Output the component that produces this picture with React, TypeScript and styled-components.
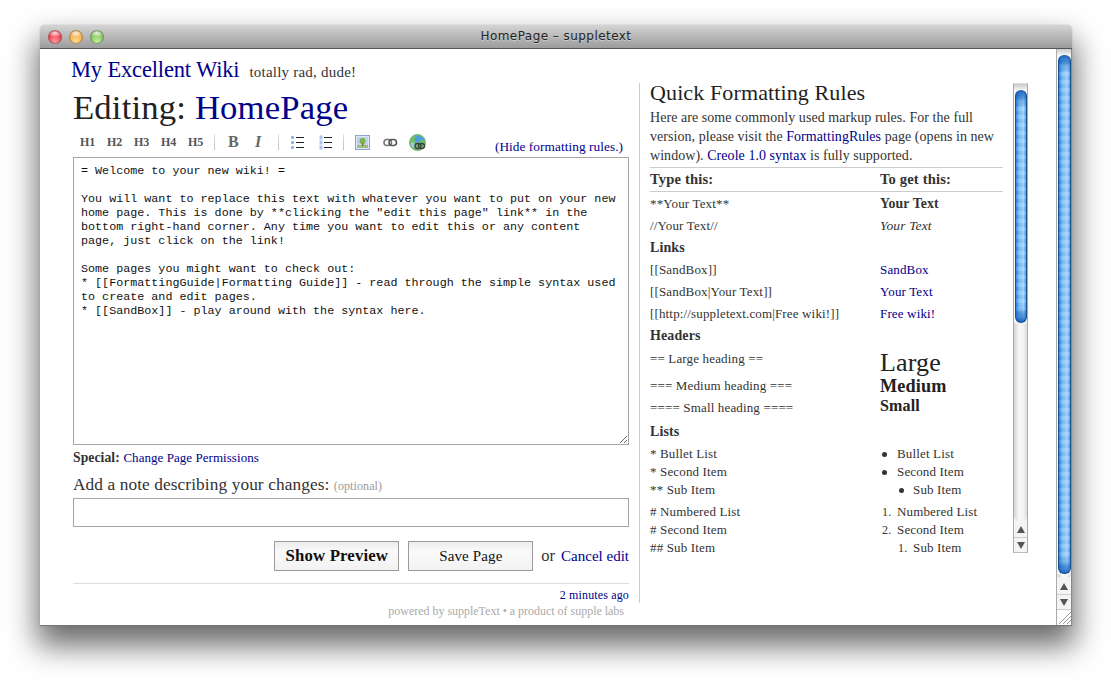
import * as React from "react";
import styled, { createGlobalStyle } from "styled-components";

const GlobalStyle = createGlobalStyle`
  html, body {
    margin: 0;
    padding: 0;
    background: #fff;
  }
  body {
    width: 1111px;
    height: 680px;
    overflow: hidden;
    font-family: "Liberation Serif", Georgia, serif;
    color: #333;
  }
`;

const LINK = "#00008b";

const EDITOR_TEXT = `= Welcome to your new wiki! =

You will want to replace this text with whatever you want to put on your new home page. This is done by **clicking the "edit this page" link** in the bottom right-hand corner. Any time you want to edit this or any content page, just click on the link!

Some pages you might want to check out:
* [[FormattingGuide|Formatting Guide]] - read through the simple syntax used to create and edit pages.
* [[SandBox]] - play around with the syntax here.`;

const Desktop = styled.div`
  padding: 25px 39px 54px 40px;
`;

const Window = styled.div`
  height: 601px;
  display: flex;
  flex-direction: column;
  border-radius: 5px 5px 0 0;
  background: #fff;
  box-shadow: 0 0 1px 0 rgba(0, 0, 0, 0.45), 0 17px 30px 3px rgba(0, 0, 0, 0.58);
`;

const TitleBar = styled.div`
  height: 24px;
  flex: none;
  display: flex;
  align-items: center;
  padding-left: 8px;
  position: relative;
  border-radius: 5px 5px 0 0;
  border-bottom: 1px solid #555;
  box-sizing: border-box;
  background: linear-gradient(#d4d4d4, #9c9c9c);
`;

const Lights = styled.div`
  display: flex;
  gap: 7px;
`;

const Light = styled.span<{ $edge: string; $mid: string; $glow: string }>`
  width: 14px;
  height: 14px;
  border-radius: 50%;
  box-sizing: border-box;
  border: 1px solid rgba(70, 70, 70, 0.4);
  background:
    radial-gradient(ellipse 8px 4px at 50% 18%, rgba(255, 255, 255, 0.85), rgba(255, 255, 255, 0) 100%),
    radial-gradient(circle at 50% 85%, ${(p) => p.$glow}, ${(p) => p.$mid} 60%, ${(p) => p.$edge});
`;

const WindowTitle = styled.div`
  position: absolute;
  left: 0;
  right: 0;
  top: 3px;
  text-align: center;
  font-family: "DejaVu Sans", sans-serif;
  font-size: 12px;
  line-height: 17px;
  letter-spacing: 0.45px;
  color: #222;
  text-shadow: 0 1px 0 rgba(255, 255, 255, 0.35);
`;

const WindowBody = styled.div`
  flex: 1;
  display: flex;
  min-height: 0;
  border-right: 1px solid #8a8a8a;
  border-bottom: 1px solid #777;
`;

const Page = styled.div`
  flex: 1;
  min-width: 0;
  overflow: hidden;
  padding-left: 33px;
`;

const Masthead = styled.div`
  height: 34px;
  display: flex;
  align-items: baseline;
  gap: 10px;
  margin-left: -2px;
  padding-top: 6px;
  box-sizing: border-box;
`;

const SiteName = styled.a`
  font-size: 22.5px;
  line-height: 30px;
  letter-spacing: -0.16px;
  color: ${LINK};
`;

const Tagline = styled.span`
  font-size: 15px;
  color: #333;
  letter-spacing: 0.22px;
`;

const Columns = styled.div`
  display: flex;
`;

const EditColumn = styled.div`
  width: 556px;
  flex: none;
`;

const Heading = styled.h1`
  margin: 0;
  height: 50px;
  font-size: 34.7px;
  line-height: 50px;
  font-weight: 400;
  letter-spacing: 0.16px;
  color: #222;
`;

const Link = styled.a`
  color: ${LINK};
`;

const Toolbar = styled.div`
  height: 24px;
  box-sizing: border-box;
  padding: 0 0 6px 7px;
  display: flex;
  align-items: center;
  position: relative;
`;

const ToolButton = styled.span<{ $italic?: boolean }>`
  width: 27px;
  flex: none;
  font-size: 16px;
  font-weight: 700;
  font-style: ${(p) => (p.$italic ? "italic" : "normal")};
  color: #666;
  line-height: 16px;
`;

const HeadingButton = styled(ToolButton)`
  font-size: 12px;
  color: #555;
`;

const ToolIcon = styled.span<{ $w?: number }>`
  width: ${(p) => p.$w ?? 27}px;
  flex: none;
  display: flex;
  align-items: center;
`;

const ToolDivider = styled.span<{ $before?: number; $after?: number }>`
  width: 1px;
  height: 16px;
  flex: none;
  margin: 0 ${(p) => p.$after ?? 13}px 0 ${(p) => p.$before ?? -1}px;
  background: linear-gradient(#e0e0e0, #c9bcae);
`;

const HideRules = styled.a`
  position: absolute;
  right: 6px;
  top: 5px;
  font-size: 13.3px;
  line-height: 18px;
  letter-spacing: 0.06px;
  color: ${LINK};
`;

const Editor = styled.textarea`
  display: block;
  width: 556px;
  height: 288px;
  box-sizing: border-box;
  margin: 0;
  padding: 6px 7px;
  border: 1px solid #a5a5a5;
  border-radius: 0;
  outline: none;
  overflow: hidden;
  resize: both;
  background: #fff;
  font-family: "Liberation Mono", "Courier New", monospace;
  font-size: 11.72px;
  line-height: 14px;
  color: #111;
`;

const SpecialRow = styled.div`
  margin-top: 4px;
  height: 18px;
  font-size: 13.6px;
  line-height: 18px;
  letter-spacing: 0.1px;
`;

const SpecialLink = styled.a`
  font-size: 13px;
  letter-spacing: 0.05px;
  color: ${LINK};
`;

const NoteLabel = styled.div`
  margin-top: 6px;
  height: 25px;
  font-size: 17.3px;
  line-height: 24px;
  letter-spacing: 0.1px;
  color: #333;
`;

const Optional = styled.span`
  font-size: 12px;
  color: #999;
`;

const NoteInput = styled.div`
  height: 29px;
  box-sizing: border-box;
  border: 1px solid #a5a5a5;
  background: #fff;
`;

const Actions = styled.div`
  margin-top: 14px;
  height: 30px;
  display: flex;
  align-items: center;
  justify-content: flex-end;
`;

const Button = styled.button<{ $primary?: boolean }>`
  width: 125px;
  height: 30px;
  box-sizing: border-box;
  margin: 0 8px 0 0;
  padding: 0;
  border: 1px solid #9a9a9a;
  border-radius: 0;
  background: linear-gradient(#ececec, #fafafa 35%, #f2f2f2);
  font-family: "Liberation Serif", Georgia, serif;
  font-size: ${(p) => (p.$primary ? 16.8 : 15)}px;
  font-weight: ${(p) => (p.$primary ? 700 : 400)};
  letter-spacing: 0.14px;
  color: #111;
  & + & {
    margin-left: 1px;
  }
`;

const Or = styled.span`
  font-size: 16.5px;
  margin-right: 6px;
  color: #333;
`;

const CancelLink = styled.a`
  font-size: 15px;
  color: ${LINK};
`;

const Footer = styled.div`
  margin-top: 12px;
  border-top: 1px solid #ddd;
  padding-top: 2px;
  text-align: right;
`;

const Updated = styled.div`
  height: 17px;
  font-size: 12px;
  line-height: 18px;
  letter-spacing: 0.15px;
  color: ${LINK};
`;

const PoweredBy = styled.div`
  height: 16px;
  padding-right: 5px;
  font-size: 12px;
  line-height: 16px;
  letter-spacing: -0.02px;
  color: #aaa;
`;

const RulesColumn = styled.div`
  margin-left: 10px;
  height: 520px;
  padding-left: 10px;
  border-left: 1px solid #ccc;
  display: flex;
  gap: 10px;
  align-items: flex-start;
`;

const Rules = styled.div`
  width: 353px;
  flex: none;
`;

const RulesTitle = styled.h2`
  margin: 0;
  height: 22px;
  font-size: 22px;
  line-height: 20px;
  font-weight: 400;
  letter-spacing: 0.12px;
  color: #222;
`;

const Intro = styled.p`
  margin: 3px 0 0;
  font-size: 14px;
  line-height: 19px;
  letter-spacing: 0.05px;
  color: #333;
  padding-bottom: 2px;
`;

const RuleRow = styled.div<{ $h?: number }>`
  display: grid;
  grid-template-columns: 230px 1fr;
  height: ${(p) => p.$h ?? 22}px;
  align-items: center;
  font-size: 13px;
  letter-spacing: 0.15px;
  line-height: 16px;
  color: #333;
`;

const RuleHead = styled(RuleRow)`
  height: 25px;
  box-sizing: border-box;
  margin-bottom: 1px;
  padding-bottom: 1px;
  border-top: 1px solid #ccc;
  border-bottom: 1px solid #ccc;
  font-size: 14.6px;
  font-weight: 700;
`;

const SectionLabel = styled.div<{ $gap?: number }>`
  height: 22px;
  margin: ${(p) => p.$gap ?? 0}px 0;
  line-height: 22px;
  font-size: 14px;
  font-weight: 700;
  letter-spacing: 0.12px;
  color: #333;
`;

const ListRow = styled(RuleRow)`
  height: 18px;
`;

const Bold = styled.b`
  font-size: 13.8px;
  letter-spacing: 0.12px;
`;

const Italic = styled.i`
  font-size: 13.5px;
`;

const Sample = styled.span<{ $size: number; $top?: number; $bottom?: number }>`
  font-size: ${(p) => p.$size}px;
  line-height: 18px;
  padding: ${(p) => p.$top ?? 0}px 0 ${(p) => p.$bottom ?? 0}px;
  color: #222;
`;

const TopCell = styled.span`
  align-self: start;
  padding-top: 4px;
`;

const ListItem = styled.span<{ $depth?: number }>`
  position: relative;
  padding-left: ${(p) => (p.$depth ? 33 : 17)}px;
`;

const Marker = styled.span<{ $depth?: number }>`
  position: absolute;
  left: ${(p) => (p.$depth ? 18 : 2)}px;
  font-size: 12px;
  top: 0;
`;

const Dot = styled.span<{ $depth?: number }>`
  position: absolute;
  left: ${(p) => (p.$depth ? 19 : 2)}px;
  top: 6px;
  width: 5px;
  height: 5px;
  border-radius: 50%;
  background: #333;
`;

const ListSpacer = styled.div`
  height: 4px;
`;

const ScrollBar = styled.div<{ $outer?: boolean }>`
  width: 15px;
  flex: none;
  box-sizing: border-box;
  display: flex;
  flex-direction: column;
  background: #f6f6f6;
  border-left: 1px solid #aaa;
  ${(p) => (p.$outer ? "height: 100%;" : "height: 470px; border-right: 1px solid #aaa; border-top: 1px solid #ddd; border-bottom: 1px solid #bbb;")}
`;

const ScrollCap = styled.div<{ $h: number }>`
  height: ${(p) => p.$h}px;
  flex: none;
  background: linear-gradient(#c9c9c9, #f4f4f4);
`;

const ScrollThumb = styled.div<{ $h: number }>`
  height: ${(p) => p.$h}px;
  flex: none;
  box-sizing: border-box;
  margin: 0 0.5px;
  border-radius: 6px;
  border: 1px solid #16528f;
  border-top-color: #2465a8;
  background:
    linear-gradient(rgba(11, 88, 186, 0.85), rgba(120, 190, 250, 0) 16px),
    linear-gradient(rgba(120, 190, 250, 0) calc(100% - 16px), rgba(11, 88, 186, 0.85)),
    repeating-linear-gradient(rgba(255, 255, 255, 0.12) 0 4px, rgba(0, 40, 120, 0.04) 4px 8px),
    linear-gradient(90deg, #2a7fd8, #79bdf5 30%, #a4d6fb 75%, #4f9be6);
`;

const ScrollTrack = styled.div`
  flex: 1;
  min-height: 0;
  border-radius: 0 0 7px 7px;
  background: linear-gradient(90deg, #d4d4d4, #f8f8f8 40%, #f4f4f4 70%, #dcdcdc);
`;

const ScrollArrow = styled.div<{ $down?: boolean }>`
  height: 15px;
  flex: none;
  display: flex;
  align-items: center;
  justify-content: center;
  box-sizing: border-box;
  background: #f4f4f4;
  ${(p) => (p.$down ? "border-top: 1px solid #ccc;" : "")}
  &::before {
    content: "";
    width: 0;
    height: 0;
    border-left: 4px solid transparent;
    border-right: 4px solid transparent;
    ${(p) => (p.$down ? "border-top: 7px solid #555;" : "border-bottom: 7px solid #555;")}
  }
`;

const ResizeCorner = styled.div`
  height: 15px;
  flex: none;
  border-top: 1px solid #ccc;
  background: #fff;
  display: flex;
`;

const BulletIcon = () => (
  <svg width="15" height="15" viewBox="0 0 15 15">
    {[2.5, 7.5, 12.5].map((y) => (
      <React.Fragment key={y}>
        <rect x="1" y={y - 1.5} width="3" height="3" rx="1" fill="#8fb0e8" />
        <rect x="6" y={y - 0.5} width="8" height="1" fill="#222" />
      </React.Fragment>
    ))}
  </svg>
);

const NumberIcon = () => (
  <svg width="15" height="15" viewBox="0 0 15 15">
    {[2.5, 7.5, 12.5].map((y) => (
      <React.Fragment key={y}>
        <rect x="1.5" y={y - 2} width="3" height="4" fill="#a9c3ee" />
        <rect x="6" y={y - 0.5} width="8" height="1" fill="#222" />
      </React.Fragment>
    ))}
  </svg>
);

const ImageIcon = () => (
  <svg width="15" height="15" viewBox="0 0 15 15">
    <rect x="0.5" y="0.5" width="14" height="14" fill="#dfe6f5" stroke="#8aa3cf" />
    <rect x="2" y="2" width="11" height="11" fill="#bcd3ea" />
    <rect x="2" y="10" width="11" height="3" fill="#9cc07a" />
    <circle cx="7.5" cy="6" r="3" fill="#7fb24a" />
    <rect x="7" y="8" width="1.4" height="3" fill="#8a6a3a" />
  </svg>
);

const LinkIcon = () => (
  <svg width="15" height="15" viewBox="0 0 15 15" fill="none">
    <rect x="1" y="4.500" width="7.500" height="6" rx="3" stroke="#777" strokeWidth="1.600" />
    <rect x="6" y="4.500" width="7.500" height="6" rx="3" stroke="#555" strokeWidth="1.600" />
  </svg>
);

const WebLinkIcon = () => (
  <svg width="17" height="17" viewBox="0 0 17 17" fill="none">
    <circle cx="8.500" cy="8.500" r="8" fill="#6fc06a" stroke="#5aa060" strokeWidth="0.700" />
    <path d="M8 1.500c3-.5 6 1.500 7 4.500-2 1-3-1-4 1s-4 2-5 0 0-4 2-5.500z" fill="#4f9fe0" />
    <path d="M2 9c2-1 4 0 4 2s-1 3-2 3c-1-1-2-3-2-5z" fill="#9bd0f0" />
    <rect x="6" y="9.500" width="6" height="5" rx="2.400" stroke="#444" strokeWidth="1.500" />
    <rect x="9.500" y="9.500" width="6" height="5" rx="2.400" stroke="#444" strokeWidth="1.500" />
  </svg>
);

const GripLines = () => (
  <svg width="14" height="14" viewBox="0 0 14 14" stroke="#999" strokeWidth="1">
    <path d="M2 14 L14 2 M6 14 L14 6 M10 14 L14 10" />
  </svg>
);

const App: React.FC = () => {
  return (
    <Desktop>
      <GlobalStyle />
      <Window>
        <TitleBar>
          <Lights>
            <Light $edge="#c4101c" $mid="#f0424c" $glow="#ff9aa0" />
            <Light $edge="#cf7d12" $mid="#f5ad45" $glow="#ffdc8f" />
            <Light $edge="#4f9a33" $mid="#82c25a" $glow="#c4eea6" />
          </Lights>
          <WindowTitle>HomePage – suppletext</WindowTitle>
        </TitleBar>
        <WindowBody>
          <Page>
            <Masthead>
              <SiteName>My Excellent Wiki</SiteName>
              <Tagline>totally rad, dude!</Tagline>
            </Masthead>
            <Columns>
              <EditColumn>
                <Heading>
                  Editing: <Link>HomePage</Link>
                </Heading>
                <Toolbar>
                  <HeadingButton>H1</HeadingButton>
                  <HeadingButton>H2</HeadingButton>
                  <HeadingButton>H3</HeadingButton>
                  <HeadingButton>H4</HeadingButton>
                  <HeadingButton>H5</HeadingButton>
                  <ToolDivider />
                  <ToolButton>B</ToolButton>
                  <ToolButton $italic>I</ToolButton>
                  <ToolDivider $before={-4} $after={11} />
                  <ToolIcon $w={28}><BulletIcon /></ToolIcon>
                  <ToolIcon $w={25}><NumberIcon /></ToolIcon>
                  <ToolDivider $before={0} $after={11} />
                  <ToolIcon $w={28}><ImageIcon /></ToolIcon>
                  <ToolIcon $w={26}><LinkIcon /></ToolIcon>
                  <ToolIcon><WebLinkIcon /></ToolIcon>
                  <HideRules>(Hide formatting rules.)</HideRules>
                </Toolbar>
                <Editor readOnly value={EDITOR_TEXT} spellCheck={false} />
                <SpecialRow>
                  <b>Special:</b> <SpecialLink>Change Page Permissions</SpecialLink>
                </SpecialRow>
                <NoteLabel>
                  Add a note describing your changes: <Optional>(optional)</Optional>
                </NoteLabel>
                <NoteInput />
                <Actions>
                  <Button $primary>Show Preview</Button>
                  <Button>Save Page</Button>
                  <Or>or</Or>
                  <CancelLink>Cancel edit</CancelLink>
                </Actions>
                <Footer>
                  <Updated>2 minutes ago</Updated>
                  <PoweredBy>powered by suppleText • a product of supple labs</PoweredBy>
                </Footer>
              </EditColumn>
              <RulesColumn>
                <Rules>
                  <RulesTitle>Quick Formatting Rules</RulesTitle>
                  <Intro>
                    Here are some commonly used markup rules. For the full version, please visit the{" "}
                    <Link>FormattingRules</Link> page (opens in new window). <Link>Creole 1.0 syntax</Link> is fully
                    supported.
                  </Intro>
                  <RuleHead>
                    <span>Type this:</span>
                    <span>To get this:</span>
                  </RuleHead>
                  <RuleRow>
                    <span>**Your Text**</span>
                    <Bold>Your Text</Bold>
                  </RuleRow>
                  <RuleRow>
                    <span>//Your Text//</span>
                    <Italic>Your Text</Italic>
                  </RuleRow>
                  <SectionLabel>Links</SectionLabel>
                  <RuleRow>
                    <span>[[SandBox]]</span>
                    <Link>SandBox</Link>
                  </RuleRow>
                  <RuleRow>
                    <span>[[SandBox|Your Text]]</span>
                    <Link>Your Text</Link>
                  </RuleRow>
                  <RuleRow>
                    <span>[[http://suppletext.com|Free wiki!]]</span>
                    <Link>Free wiki!</Link>
                  </RuleRow>
                  <SectionLabel>Headers</SectionLabel>
                  <RuleRow $h={28}>
                    <TopCell>== Large heading ==</TopCell>
                    <Sample $size={26} $top={4}>Large</Sample>
                  </RuleRow>
                  <RuleRow>
                    <span>=== Medium heading ===</span>
                    <Sample $size={18.2}><b>Medium</b></Sample>
                  </RuleRow>
                  <RuleRow>
                    <span>==== Small heading ====</span>
                    <Sample $size={16} $bottom={4}><b>Small</b></Sample>
                  </RuleRow>
                  <SectionLabel $gap={2}>Lists</SectionLabel>
                  <ListRow>
                    <span>* Bullet List</span>
                    <ListItem><Dot />Bullet List</ListItem>
                  </ListRow>
                  <ListRow>
                    <span>* Second Item</span>
                    <ListItem><Dot />Second Item</ListItem>
                  </ListRow>
                  <ListRow>
                    <span>** Sub Item</span>
                    <ListItem $depth={1}><Dot $depth={1} />Sub Item</ListItem>
                  </ListRow>
                  <ListSpacer />
                  <ListRow>
                    <span># Numbered List</span>
                    <ListItem><Marker>1.</Marker>Numbered List</ListItem>
                  </ListRow>
                  <ListRow>
                    <span># Second Item</span>
                    <ListItem><Marker>2.</Marker>Second Item</ListItem>
                  </ListRow>
                  <ListRow>
                    <span>## Sub Item</span>
                    <ListItem $depth={1}><Marker $depth={1}>1.</Marker>Sub Item</ListItem>
                  </ListRow>
                </Rules>
                <ScrollBar>
                  <ScrollCap $h={6} />
                  <ScrollThumb $h={233} />
                  <ScrollTrack />
                  <ScrollArrow />
                  <ScrollArrow $down />
                </ScrollBar>
              </RulesColumn>
            </Columns>
          </Page>
          <ScrollBar $outer>
            <ScrollCap $h={6} />
            <ScrollThumb $h={519} />
            <ScrollTrack />
            <ScrollArrow />
            <ScrollArrow $down />
            <ResizeCorner><GripLines /></ResizeCorner>
          </ScrollBar>
        </WindowBody>
      </Window>
    </Desktop>
  );
};

export default App;
